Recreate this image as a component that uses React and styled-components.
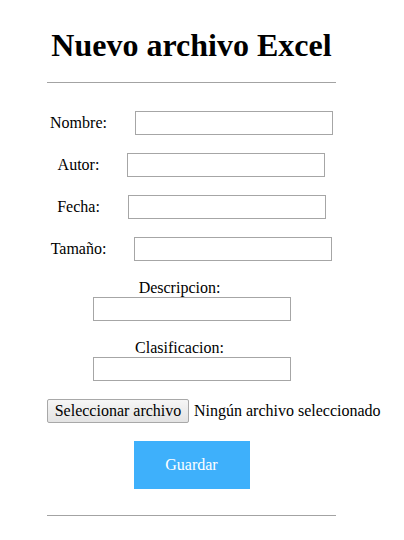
import React from "react";
import styled, { createGlobalStyle } from "styled-components";

const GlobalStyle = createGlobalStyle`
  body {
    margin: 0;
    background: #ffffff;
    font-family: "Liberation Serif", "Times New Roman", serif;
    color: #000;
  }
`;

const Wrapper = styled.div`
  width: 289px;
  margin-left: 47px;
  padding-top: 27px;
`;

const Title = styled.h1`
  margin: 0;
  font-size: 32px;
  line-height: 37px;
  font-weight: bold;
  text-align: center;
`;

const Rule = styled.hr`
  margin: ${(p) => p.$top}px 0 0;
  border: none;
  border-top: 1px solid #a3a3a3;
  height: 0;
`;

const Form = styled.form`
  display: flex;
  flex-direction: column;
  gap: 18px;
  margin-top: 28px;
`;

const Row = styled.div`
  display: flex;
  align-items: center;
  justify-content: center;
  gap: 28px;
  font-size: 16px;
  height: 24px;
`;

const Stack = styled.div`
  display: flex;
  flex-direction: column;
  align-items: center;
  font-size: 16px;
`;

const StackLabel = styled.label`
  display: block;
  line-height: 18px;
  padding-right: 24px;
`;

const Input = styled.input`
  box-sizing: border-box;
  width: 198px;
  height: 24px;
  border: 1px solid #a6a6a6;
  background: #fff;
  margin: 0;
  padding: 1px 2px;
  font: inherit;
`;

const FileRow = styled.div`
  display: flex;
  align-items: center;
  gap: 5px;
  font-size: 16px;
  height: 24px;
  white-space: nowrap;
`;

const FileButton = styled.button`
  flex-shrink: 0;
  box-sizing: border-box;
  height: 24px;
  width: 142px;
  padding: 0;
  margin: 0;
  border: 1px solid #a8a8a8;
  border-radius: 2px;
  background: linear-gradient(#f6f6f6, #e3e3e3);
  font-family: "Liberation Serif", "Times New Roman", serif;
  font-size: 16px;
  color: #000;
`;

const SaveButton = styled.button`
  align-self: center;
  width: 116px;
  height: 48px;
  border: none;
  background: #3eb0fb;
  color: #fff;
  font-family: "Liberation Serif", "Times New Roman", serif;
  font-size: 16px;
  padding: 0;
`;

export default function App() {
  return (
    <>
      <GlobalStyle />
      <Wrapper>
        <Title>Nuevo archivo Excel</Title>
        <Rule $top={18} />
        <Form onSubmit={(e) => e.preventDefault()}>
          <Row>
            <label>Nombre:</label>
            <Input type="text" />
          </Row>
          <Row>
            <label>Autor:</label>
            <Input type="text" />
          </Row>
          <Row>
            <label>Fecha:</label>
            <Input type="text" />
          </Row>
          <Row>
            <label>Tamaño:</label>
            <Input type="text" />
          </Row>
          <Stack>
            <StackLabel>Descripcion:</StackLabel>
            <Input type="text" />
          </Stack>
          <Stack>
            <StackLabel>Clasificacion:</StackLabel>
            <Input type="text" />
          </Stack>
          <FileRow>
            <FileButton type="button">Seleccionar archivo</FileButton>
            <span>Ningún archivo seleccionado</span>
          </FileRow>
          <SaveButton type="submit">Guardar</SaveButton>
        </Form>
        <Rule $top={26} />
      </Wrapper>
    </>
  );
}
